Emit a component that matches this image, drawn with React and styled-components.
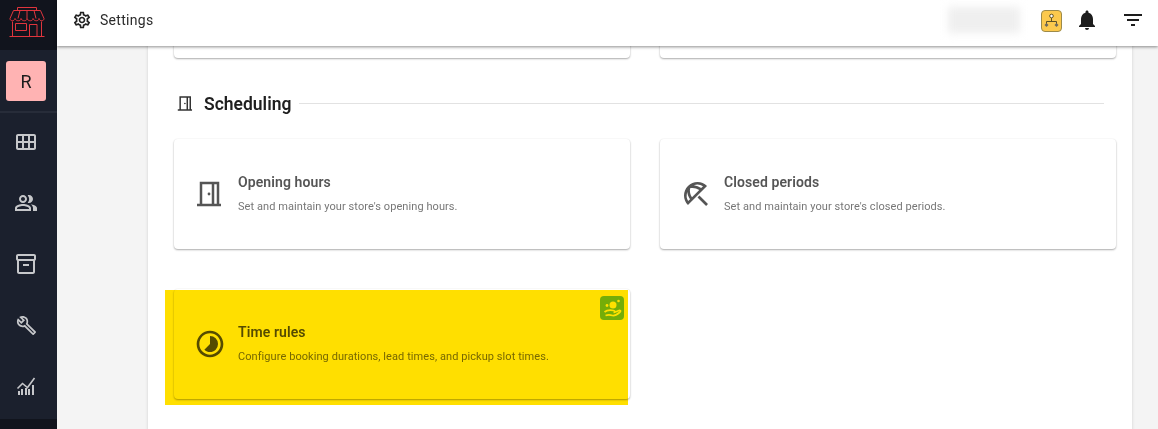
import styled, { createGlobalStyle } from 'styled-components';
import {
  MdOutlineSettings,
  MdOutlineCalendarViewMonth,
  MdOutlinePeopleAlt,
  MdOutlineInventory2,
  MdOutlineBuild,
  MdNotifications,
  MdFilterList,
  MdOutlineBeachAccess,
  MdOutlineTimelapse,
} from 'react-icons/md';

const GlobalStyle = createGlobalStyle`
  html, body { margin: 0; padding: 0; height: 100%; overflow: hidden; }
  body { font-family: Roboto, "Liberation Sans", sans-serif; background: #f4f4f4; }
  * { box-sizing: border-box; }
`;

const Page = styled.div`
  display: flex;
  width: 1158px;
  height: 429px;
  overflow: hidden;
`;

const Sidebar = styled.aside`
  width: 57px;
  flex: none;
  display: flex;
  flex-direction: column;
  background: #1b202d;
`;

const LogoCell = styled.div`
  height: 50px;
  flex: none;
  display: flex;
  align-items: center;
  justify-content: center;
  padding: 0 3px 5px 0;
  background: #11141d;
`;

const StoreBlock = styled.div`
  height: 63px;
  flex: none;
  padding: 11px 0 0 6px;
  border-bottom: 2px solid #272c39;
`;

const StoreButton = styled.div`
  width: 40px;
  height: 40px;
  border-radius: 3px;
  background: #ffb3b3;
  color: #1c1c1c;
  font-size: 18px;
  display: flex;
  align-items: center;
  justify-content: center;
`;

const NavList = styled.nav`
  flex: 1;
  display: flex;
  flex-direction: column;
  align-items: center;
  padding: 17px 5px 0 0;
  gap: 37px;
  color: #c6c7ca;
`;

const NavSlot = styled.div`
  width: 24px;
  height: 24px;
  display: flex;
  align-items: center;
  justify-content: center;
  font-size: ${(p) => p.$size || 24}px;
`;

const SidebarFoot = styled.div`
  height: 10px;
  flex: none;
  background: #11141d;
`;

const Main = styled.div`
  flex: 1;
  min-width: 0;
  display: flex;
  flex-direction: column;
`;

const Header = styled.header`
  height: 46px;
  flex: none;
  position: relative;
  z-index: 2;
  display: flex;
  align-items: center;
  padding: 0 13px 6px 15px;
  background: #fff;
  box-shadow: 0 1px 3px rgba(0, 0, 0, 0.45);
`;

const HeaderTitle = styled.div`
  flex: 1;
  display: flex;
  align-items: center;
  gap: 8px;
  font-size: 14px;
  letter-spacing: 0.3px;
  color: #2b2b2b;
  svg { font-size: 20px; color: #222; }
`;

const BlurredName = styled.div`
  width: 72px;
  height: 26px;
  margin-right: 21px;
  background: #efefef;
  filter: blur(4px);
`;

const OrgBadge = styled.div`
  width: 21px;
  height: 22px;
  margin: 2px 13px 0 0;
  border: 1px solid #9c8a4a;
  border-radius: 4px;
  background: #fcc94d;
  display: flex;
  align-items: center;
  justify-content: center;
`;

const HeaderIcon = styled.div`
  display: flex;
  color: #1d1d1d;
  font-size: 24px;
  margin-right: ${(p) => p.$gap || 0}px;
`;

const Scroller = styled.div`
  flex: 1;
  min-height: 0;
  overflow: hidden;
  padding-left: 91px;
  padding-right: 26px;
`;

const Panel = styled.main`
  margin-top: -98px;
  padding: 0 16px 0 26px;
  height: 500px;
  background: #fff;
  box-shadow: 0 0 3px rgba(0, 0, 0, 0.15);
`;

const CardGrid = styled.div`
  display: grid;
  grid-template-columns: 456px 456px;
  column-gap: 30px;
  row-gap: 40px;
`;

const SectionHead = styled.div`
  display: flex;
  align-items: center;
  height: 24px;
  margin: 33px 12px 24px 2px;
  color: #1f1f1f;
`;

const SectionIcon = styled.div`
  display: flex;
  margin-right: 9px;
  color: #333;
`;

const SectionTitle = styled.h2`
  margin: 1px 8px 0 0;
  font-size: 17.5px;
  font-weight: 600;
`;

const SectionRule = styled.div`
  flex: 1;
  height: 1px;
  background: #e2e2e2;
`;

const Card = styled.div`
  position: relative;
  height: 110px;
  display: flex;
  align-items: center;
  padding: 0 20px;
  background: #fff;
  border-radius: 4px;
  box-shadow: 0 1px 2px rgba(0, 0, 0, 0.32), 0 0 2px rgba(0, 0, 0, 0.06);
`;

const CardIcon = styled.div`
  width: 44px;
  flex: none;
  display: flex;
  color: #555;
  font-size: 32px;
`;

const CardTitle = styled.div`
  font-size: 14px;
  font-weight: 600;
  letter-spacing: 0.1px;
  color: #555;
  margin-bottom: 10px;
`;

const CardText = styled.div`
  font-size: 11px;
  letter-spacing: 0.07px;
  color: #777;
  padding-bottom: 2px;
`;

// highlight laid over the card, tints what is under it
const Highlight = styled.div`
  position: absolute;
  left: -9px;
  top: 1px;
  width: 463px;
  height: 115px;
  background: #ffdf00;
  mix-blend-mode: multiply;
  pointer-events: none;
`;

const FeatureBadge = styled.div`
  position: absolute;
  right: 6px;
  top: 7px;
  width: 24px;
  height: 24px;
  border-radius: 4px;
  background: #74ad08;
  display: flex;
  align-items: center;
  justify-content: center;
`;

function StoreLogo() {
  return (
    <svg width="36" height="31" viewBox="0 0 36 31" fill="none" stroke="#e0353d" strokeWidth="1">
      <path d="M8.500 3V.5h19V3" />
      <path d="M4.500 3.500h27l3.500 8c0 3-4.500 3-5 0 0 3-5 3-6 0 0 3-5 3-6 0 0 3-5 3-6 0 0 3-5 3-6 0-.5 3-5 3-5 0z" />
      <path d="M11 3.500l-2 8M18 3.500v8M25 3.500l2 8" />
      <path d="M3.500 14.500v15M32.500 14.500v15M.5 29.500h35" />
      <path d="M6.500 16.500h11v7h-11zM20.500 29V17.500h7.500V29" />
    </svg>
  );
}

function ChartIcon() {
  return (
    <svg width="24" height="24" viewBox="0 0 24 24" fill="#c6c7ca">
      <path d="M4 17v4h2v-4zM7 15v6h2v-6zM11 14v7h2v-7zM14 15v6h2v-6zM18 11v10h2V11z" />
      <path d="M3.500 14.500l5-5 5 4 7-9.500" fill="none" stroke="#c6c7ca" strokeWidth="1.600" />
    </svg>
  );
}

function DoorIcon({ size }) {
  return (
    <svg width={size} height={size} viewBox="0 0 32 32" fill="none" stroke="currentColor" strokeWidth="2.500">
      <path d="M3 27h24M7 27V5h17v22M19 5v22" />
      <circle cx="15" cy="16" r="1.400" fill="currentColor" stroke="none" />
    </svg>
  );
}

function OrgIcon() {
  return (
    <svg width="17" height="18" viewBox="0 0 17 18" fill="none" stroke="#5f5224" strokeWidth="1">
      <circle cx="8.500" cy="4" r="1.800" fill="#fff" />
      <path d="M8.500 6v3.500M3.500 12v-2.500h10V12" />
      <path d="M3.500 11l2 2-2 2-2-2zM13.500 11l2 2-2 2-2-2z" fill="#6d6a5e" stroke="none" />
    </svg>
  );
}

function HandBadgeIcon() {
  return (
    <svg width="22" height="22" viewBox="0 0 22 22" fill="none" stroke="#ffe100">
      <circle cx="12" cy="8" r="3.500" fill="#ffe100" stroke="none" />
      <circle cx="6" cy="8.500" r="1.400" fill="#ffe100" stroke="none" />
      <circle cx="17.500" cy="4" r="1.300" fill="#ffe100" stroke="none" />
      <path d="M3.500 15c3-2.500 6-2 9-1.500 2 .3 2 1.800 0 2M13 15.500l5-2c2-.5 2 1 .5 2-3 2.500-5 3.500-7 3-2-.6-4-1-7 0" strokeWidth="1.700" />
    </svg>
  );
}

const SCHEDULING_CARDS = [
  { icon: <DoorIcon size={32} />, title: 'Opening hours', text: "Set and maintain your store's opening hours." },
  { icon: <MdOutlineBeachAccess />, title: 'Closed periods', text: "Set and maintain your store's closed periods." },
];

export default function App() {
  return (
    <Page>
      <GlobalStyle />
      <Sidebar>
        <LogoCell>
          <StoreLogo />
        </LogoCell>
        <StoreBlock>
          <StoreButton>R</StoreButton>
        </StoreBlock>
        <NavList>
          <NavSlot><MdOutlineCalendarViewMonth /></NavSlot>
          <NavSlot><MdOutlinePeopleAlt /></NavSlot>
          <NavSlot><MdOutlineInventory2 /></NavSlot>
          <NavSlot $size={21}><MdOutlineBuild /></NavSlot>
          <NavSlot><ChartIcon /></NavSlot>
        </NavList>
        <SidebarFoot />
      </Sidebar>
      <Main>
        <Header>
          <HeaderTitle>
            <MdOutlineSettings />
            Settings
          </HeaderTitle>
          <BlurredName />
          <OrgBadge>
            <OrgIcon />
          </OrgBadge>
          <HeaderIcon $gap={22}>
            <MdNotifications />
          </HeaderIcon>
          <HeaderIcon>
            <MdFilterList />
          </HeaderIcon>
        </Header>
        <Scroller>
          <Panel>
            <CardGrid>
              <Card />
              <Card />
            </CardGrid>
            <SectionHead>
              <SectionIcon>
                <DoorIcon size={19} />
              </SectionIcon>
              <SectionTitle>Scheduling</SectionTitle>
              <SectionRule />
            </SectionHead>
            <CardGrid>
              {SCHEDULING_CARDS.map((c) => (
                <Card key={c.title}>
                  <CardIcon>{c.icon}</CardIcon>
                  <div>
                    <CardTitle>{c.title}</CardTitle>
                    <CardText>{c.text}</CardText>
                  </div>
                </Card>
              ))}
              <Card>
                <CardIcon>
                  <MdOutlineTimelapse />
                </CardIcon>
                <div>
                  <CardTitle>Time rules</CardTitle>
                  <CardText>Configure booking durations, lead times, and pickup slot times.</CardText>
                </div>
                <Highlight />
                <FeatureBadge>
                  <HandBadgeIcon />
                </FeatureBadge>
              </Card>
            </CardGrid>
          </Panel>
        </Scroller>
      </Main>
    </Page>
  );
}
